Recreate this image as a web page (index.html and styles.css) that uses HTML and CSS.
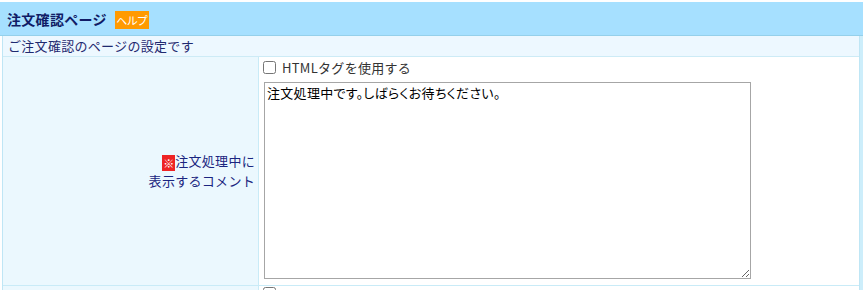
FILE: index.html
```html
<!DOCTYPE html>
<html lang="ja">
<head>
<meta charset="utf-8">
<link rel="stylesheet" href="styles.css">
</head>
<body>
<div class="page">
  <div class="header">
    <h1 class="title">注文確認ページ</h1>
    <span class="help">ヘルプ</span>
  </div>
  <div class="box">
    <div class="subtitle">ご注文確認のページの設定です</div>
    <div class="row">
      <div class="label"><div class="label-text"><span class="req">※</span>注文処理中に<br>表示するコメント</div></div>
      <div class="field">
        <label class="check"><input type="checkbox"><span>HTMLタグを使用する</span></label>
        <textarea class="comment">注文処理中です。しばらくお待ちください。</textarea>
      </div>
    </div>
    <div class="row next">
      <div class="label"></div>
      <div class="field"><label class="check"><input type="checkbox"></label></div>
    </div>
  </div>
</div>
</body>
</html>
```
FILE: styles.css
```css
html, body { margin: 0; padding: 0; background: #fff; }
body {
  font-family: "Noto Sans CJK JP", "Noto Sans", sans-serif;
  font-size: 13px;
  color: #1b2473;
  overflow: hidden;
}
.page { padding-top: 2px; }
.header {
  height: 33px;
  background: #a6e0ff;
  border-bottom: 1px solid #95d0ea;
  display: flex;
  align-items: center;
  padding-left: 7px;
  gap: 8px;
}
.title {
  margin: 0;
  font-size: 14px;
  font-weight: bold;
  color: #101c66;
  line-height: 18px;
  letter-spacing: 0.3px;
}
.help {
  background: #ff9a00;
  color: #fff;
  font-size: 11px;
  line-height: 18px;
  height: 18px;
  width: 34px;
  text-align: center;
  margin-top: 2px;
  font-feature-settings: "palt";
}
.box {
  margin-left: 2px;
  width: 856px;
  border-left: 1px solid #bfe6f5;
  border-right: 1px solid #bfe6f5;
  box-shadow: 3px 0 0 #cdeefb;
}
.subtitle {
  height: 20px;
  line-height: 20px;
  background: #edf8ff;
  padding-left: 5px;
  border-bottom: 1px solid #cdebf6;
  color: #1f2a70;
  letter-spacing: 0.3px;
}
.row {
  display: grid;
  grid-template-columns: 256px 1fr;
  border-bottom: 1px solid #c9ebf7;
}
.label {
  background: #ebf8fe;
  border-right: 1px solid #c9ebf7;
  display: flex;
  align-items: center;
  justify-content: flex-end;
  padding-right: 3px;
}
.label-text {
  text-align: right;
  line-height: 20px;
  color: #1a2580;
  letter-spacing: 0.3px;
}
.req {
  background: #ee2424;
  color: #fff;
  font-size: 11px;
  line-height: 16px;
  display: inline-block;
  padding: 0 1px;
  letter-spacing: 0;
  vertical-align: -2px;
}
.field {
  padding: 3px 0 6px 4px;
  display: flex;
  flex-direction: column;
  align-items: flex-start;
}
.check {
  display: flex;
  align-items: center;
  gap: 6px;
  height: 15px;
  color: #333;
  font-size: 13px;
}
.check input {
  margin: 0;
  width: 13px;
  height: 13px;
}
.check span { letter-spacing: 0.3px; }
.comment {
  margin: 7px 0 0 1px;
  width: 487px;
  height: 197px;
  box-sizing: border-box;
  border: 1px solid #a6a6a6;
  padding: 1px 2px;
  font-family: "Noto Sans CJK JP", sans-serif;
  font-size: 13px;
  line-height: 17px;
  color: #000;
  font-feature-settings: "palt";
  letter-spacing: 0.3px;
  resize: both;
}
.row.next .field { padding: 1px 0 0 4px; height: 10px; }
.row.next { border-bottom: none; }
```
